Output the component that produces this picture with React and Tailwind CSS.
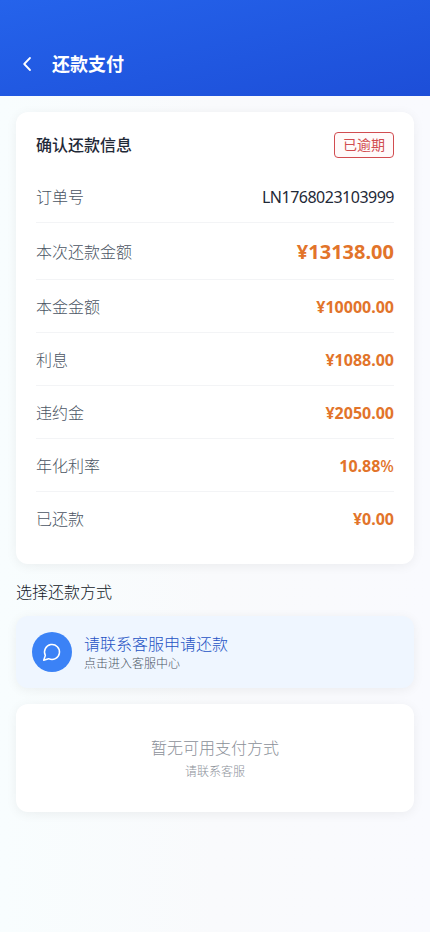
const rows = [
  { label: '本次还款金额', value: '¥13138.00', large: true },
  { label: '本金金额', value: '¥10000.00' },
  { label: '利息', value: '¥1088.00' },
  { label: '违约金', value: '¥2050.00' },
  { label: '年化利率', value: '10.88', suffix: '%' },
  { label: '已还款', value: '¥0.00' },
];

function Header() {
  return (
    <header className="flex h-24 items-end bg-linear-to-br from-[#2563eb] to-[#1d4ed8] px-4 pb-4 text-white">
      <div className="flex h-8 items-center">
        <button className="flex size-6 items-center justify-center" aria-label="返回">
          <svg width="20" height="20" viewBox="0 0 20 20" fill="none" stroke="currentColor" strokeWidth="1.8" strokeLinecap="round" strokeLinejoin="round">
            <path d="M12 4 6.2 10 12 16" />
          </svg>
        </button>
        <h1 className="ml-3 text-lg leading-7 font-bold">还款支付</h1>
      </div>
    </header>
  );
}

function Row({ label, value, suffix, large }) {
  return (
    <div className="flex items-center justify-between border-b border-[#f3f4f6] py-3.5 last:border-b-0">
      <span className="relative top-px text-base leading-6 font-light text-[#4b5563]">{label}</span>
      <span className={large ? 'relative top-px text-xl leading-7 font-bold text-[#e2742a]' : 'relative top-px text-base leading-6 font-bold text-[#e2742a]'}>
        {value}
        {suffix && <span className="font-medium">{suffix}</span>}
      </span>
    </div>
  );
}

export default function App() {
  return (
    <div className="min-h-screen bg-linear-to-r from-[#f8fdfe] via-[#f9fafc] to-[#f9fafe] font-['Noto_Sans','Noto_Sans_CJK_SC',sans-serif]">
      <Header />
      <main className="flex flex-col px-4 pt-4">
        <section className="rounded-xl bg-white p-5 shadow-[0_2px_12px_rgba(0,0,0,0.06)]">
          <div className="mb-3 flex h-[26px] items-center justify-between">
            <h2 className="text-base leading-6 font-medium text-[#1f2937]">确认还款信息</h2>
            <span className="flex h-[26px] w-[60px] items-center justify-center rounded border border-[#d14c50] bg-[#fffafa] text-sm leading-5 text-[#d14c50]">已逾期</span>
          </div>
          <div>
            <div className="flex items-center justify-between border-b border-[#f3f4f6] py-3.5">
              <span className="relative top-px text-base leading-6 font-light text-[#4b5563]">订单号</span>
              <span className="relative top-px text-base leading-6 tracking-[-0.5px] text-[#1f2937]">LN1768023103999</span>
            </div>
            {rows.map((row) => (
              <Row key={row.label} {...row} />
            ))}
          </div>
        </section>

        <h2 className="mt-4 mb-3 text-base leading-6 font-light text-[#111827]">选择还款方式</h2>

        <button className="flex h-[72px] items-center rounded-xl bg-[#eff6ff] px-4 text-left shadow-[0_2px_12px_rgba(0,0,0,0.06)]">
          <span className="flex size-10 items-center justify-center rounded-full bg-[#3b82f6] text-white">
            <svg width="20" height="20" viewBox="0 0 24 24" fill="none" stroke="currentColor" strokeWidth="1.8" strokeLinecap="round" strokeLinejoin="round">
              <path d="M7.9 20A9 9 0 1 0 4 16.1L2 22Z" />
            </svg>
          </span>
          <span className="ml-3 flex flex-col">
            <span className="text-base leading-6 font-light text-[#2553c4]">请联系客服申请还款</span>
            <span className="text-xs leading-4 font-light text-[#4b5563]">点击进入客服中心</span>
          </span>
        </button>

        <section className="mt-4 flex h-[108px] flex-col items-center justify-center rounded-xl bg-white shadow-[0_2px_12px_rgba(0,0,0,0.06)]">
          <p className="text-base leading-6 font-light text-[#8b9099]">暂无可用支付方式</p>
          <p className="mt-1 text-xs leading-4 font-light text-[#8b9099]">请联系客服</p>
        </section>
      </main>
    </div>
  );
}
